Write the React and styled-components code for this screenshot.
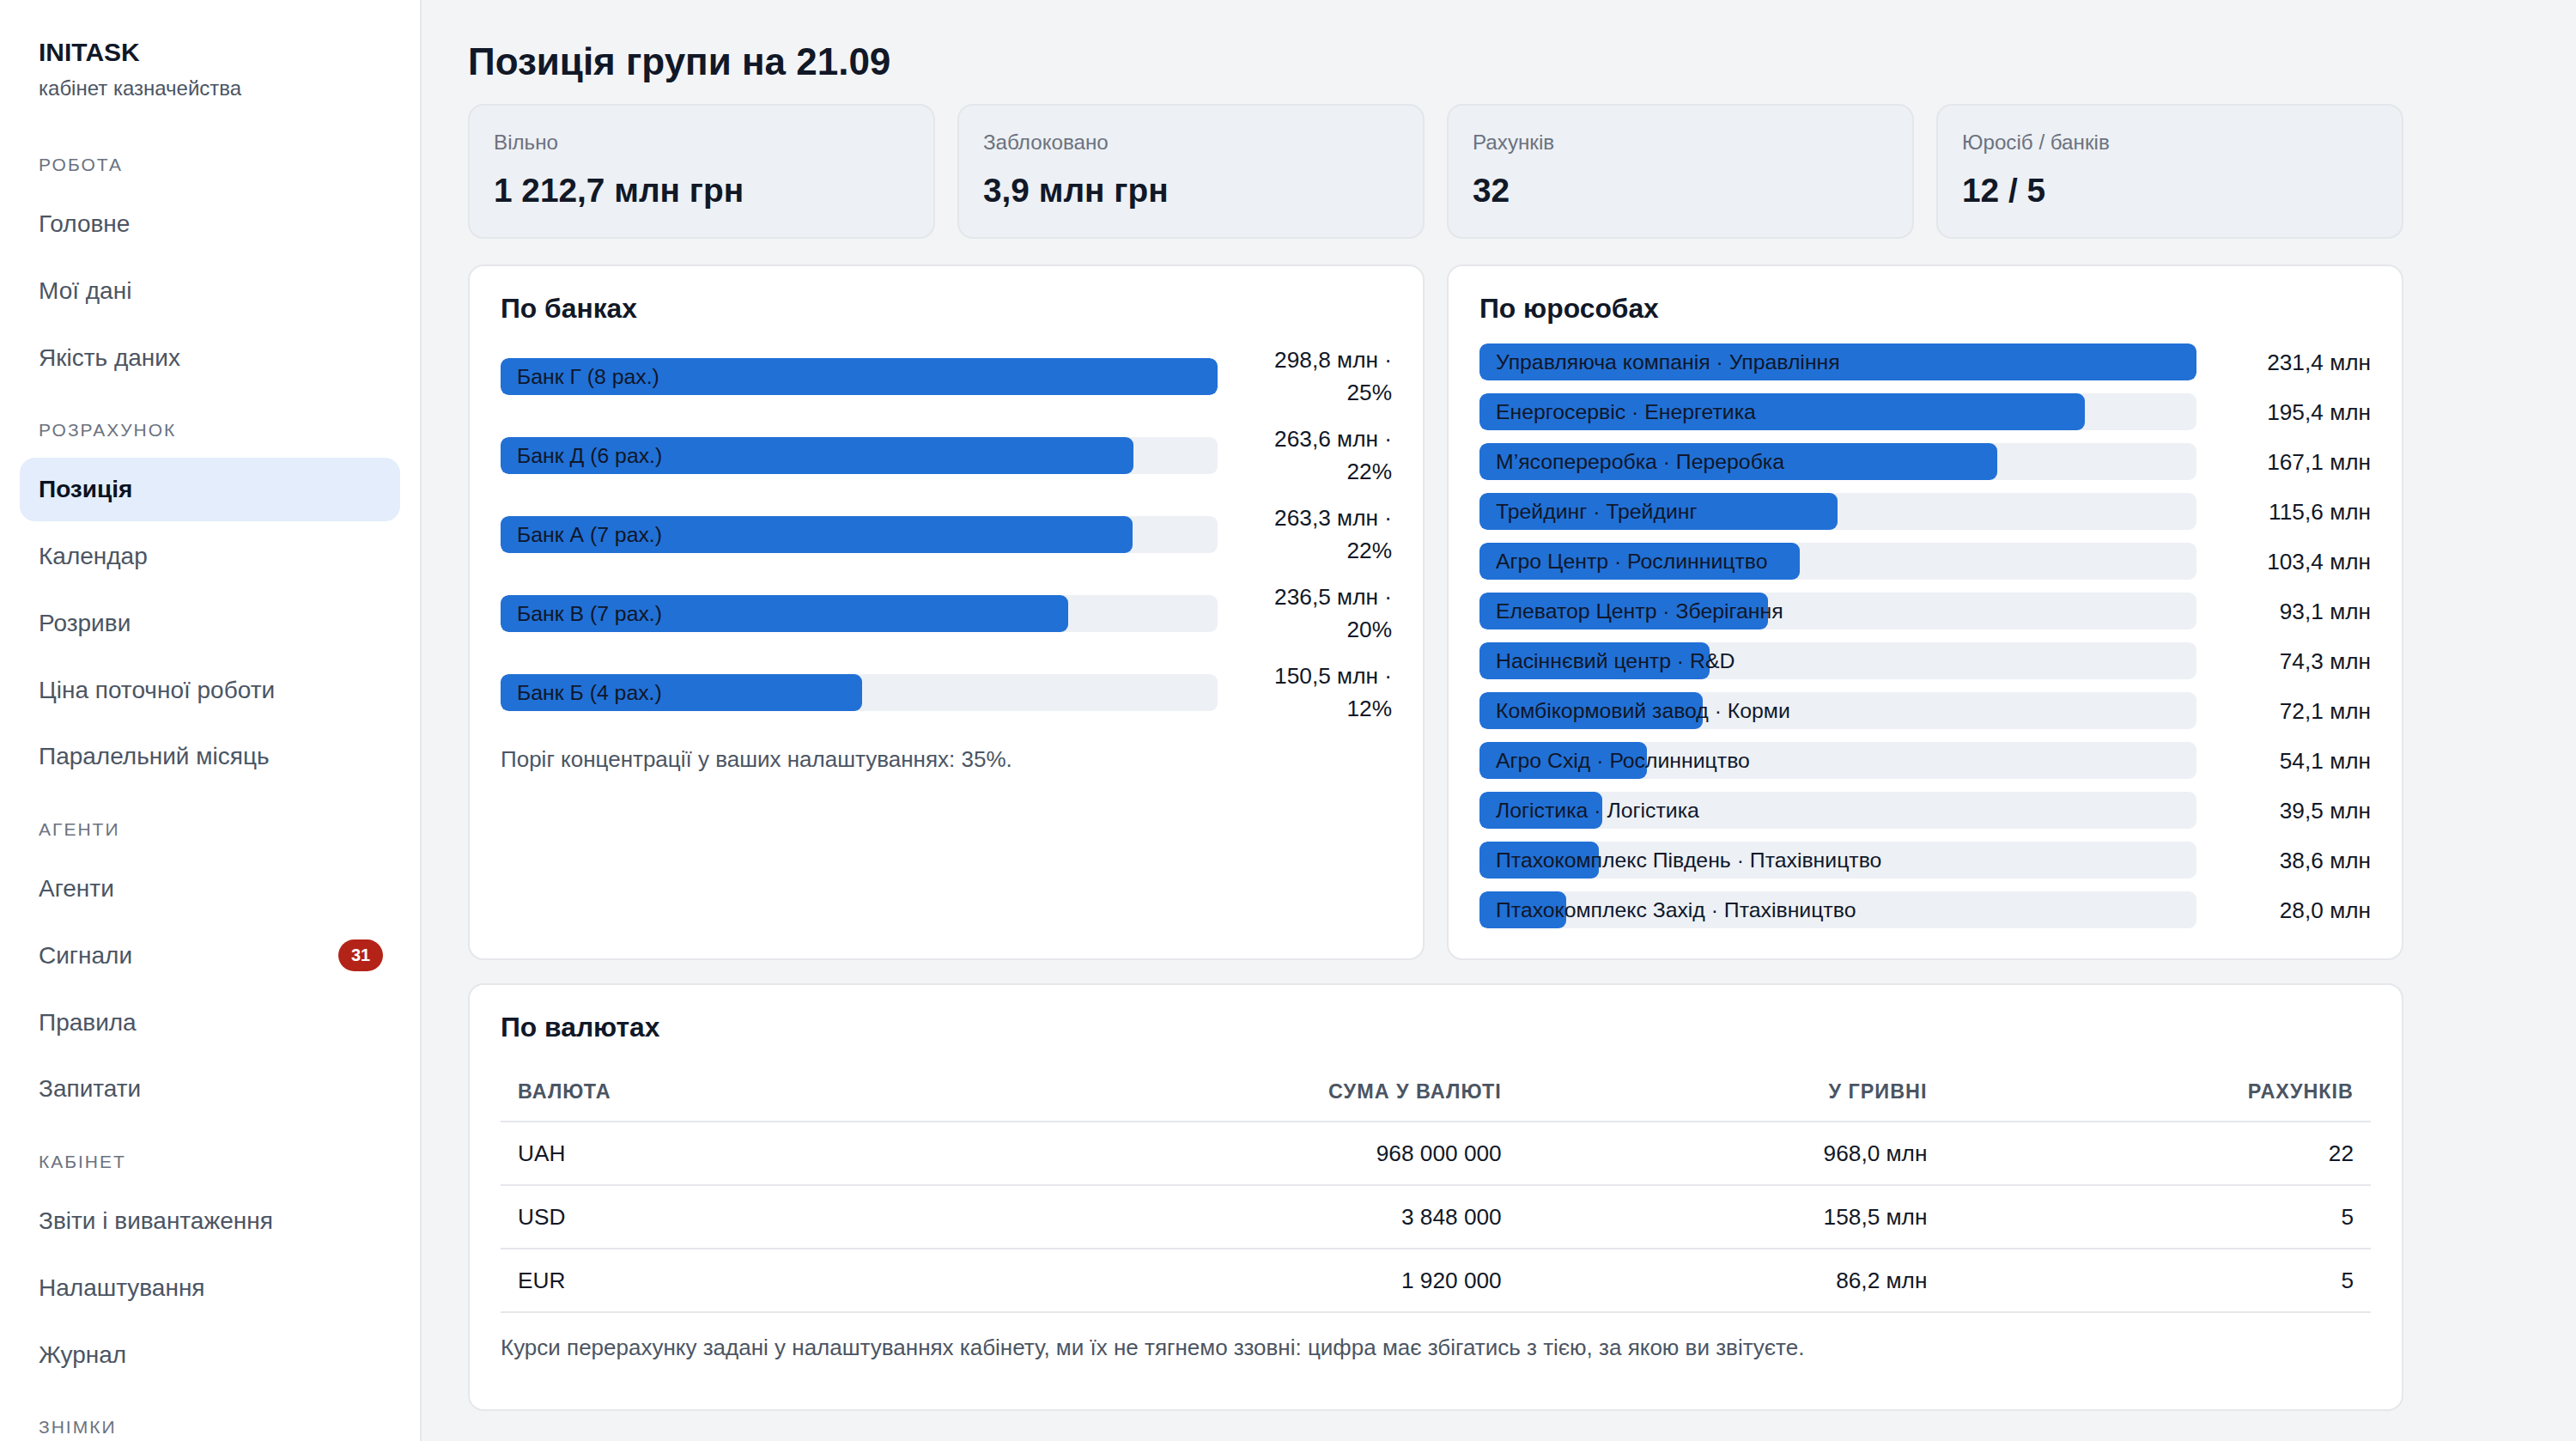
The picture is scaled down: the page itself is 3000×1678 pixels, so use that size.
import React from 'react';
import styled, { createGlobalStyle } from 'styled-components';

const GlobalStyle = createGlobalStyle`
  * { box-sizing: border-box; }
  html, body { margin: 0; padding: 0; }
  body {
    background: #f3f4f6;
    font-family: "Liberation Sans", Arial, sans-serif;
    color: #111827;
  }
`;

const Layout = styled.div`
  display: flex;
  min-height: 100vh;
`;

const Sidebar = styled.aside`
  display: flex;
  flex-direction: column;
  width: 491px;
  flex-shrink: 0;
  background: #ffffff;
  border-right: 2px solid #e5e7eb;
  padding: 43px 23px 40px;
`;

const Brand = styled.div`
  padding-left: 22px;
  margin-bottom: 30px;
`;

const BrandName = styled.div`
  font-size: 30px;
  font-weight: 700;
  line-height: 36px;
  color: #111827;
`;

const BrandSub = styled.div`
  margin-top: 8px;
  font-size: 24px;
  line-height: 31px;
  color: #4b5563;
`;

const NavSection = styled.nav`
  display: flex;
  flex-direction: column;
`;

const SectionLabel = styled.div`
  margin: 30px 0 19px;
  padding-left: 22px;
  font-size: 21px;
  line-height: 27px;
  letter-spacing: 2px;
  text-transform: uppercase;
  color: #6b7280;
`;

const NavItem = styled.div`
  display: flex;
  align-items: center;
  justify-content: space-between;
  height: 74px;
  margin-bottom: 3.75px;
  padding: 0 20px 0 22px;
  border-radius: 18px;
  font-size: 28px;
  background: ${(p) => (p.$active ? '#e3edfb' : 'transparent')};
  color: ${(p) => (p.$active ? '#0b1220' : '#4b5563')};
  font-weight: ${(p) => (p.$active ? 700 : 400)};
`;

const Badge = styled.span`
  display: inline-flex;
  align-items: center;
  justify-content: center;
  min-width: 52px;
  height: 37px;
  padding: 0 10px;
  border-radius: 999px;
  background: #b42318;
  color: #ffffff;
  font-size: 20px;
  font-weight: 700;
`;

const Main = styled.main`
  flex: 1;
  min-width: 0;
  padding: 45px 55px 37px 54px;
`;

const Content = styled.div`
  max-width: 2254px;
`;

const PageTitle = styled.h1`
  margin: 0 0 21.5px;
  font-size: 44px;
  line-height: 54px;
  font-weight: 700;
  color: #111827;
`;

const StatGrid = styled.div`
  display: grid;
  grid-template-columns: repeat(4, 1fr);
  gap: 26px;
  margin-bottom: 30.5px;
`;

const StatCard = styled.div`
  background: #edf0f4;
  border: 2px solid #e3e6ea;
  border-radius: 18px;
  padding: 29px 28px 32px;
`;

const StatLabel = styled.div`
  font-size: 24.2px;
  line-height: 28px;
  color: #6b7280;
`;

const StatValue = styled.div`
  margin-top: 19px;
  font-size: 38.8px;
  line-height: 45px;
  font-weight: 700;
  color: #111827;
`;

const PanelGrid = styled.div`
  display: grid;
  grid-template-columns: 1fr 1fr;
  gap: 26px;
  margin-bottom: 27px;
`;

const Panel = styled.section`
  background: #ffffff;
  border: 2px solid #e5e7eb;
  border-radius: 18px;
  padding: 30px 36px ${(p) => p.$padBottom || 35}px;
`;

const PanelTitle = styled.h2`
  margin: 0 0 22px;
  font-size: 31.8px;
  line-height: 38px;
  font-weight: 700;
  color: #111827;
`;

const BarList = styled.div`
  display: flex;
  flex-direction: column;
  gap: ${(p) => p.$gap}px;
`;

const BarRow = styled.div`
  display: grid;
  grid-template-columns: 1fr 170px;
  column-gap: 33px;
  align-items: center;
`;

const Track = styled.div`
  position: relative;
  height: 43px;
  background: #edf0f4;
  border-radius: 9px;
  overflow: hidden;
`;

const Fill = styled.div`
  position: absolute;
  left: 0;
  top: 0;
  bottom: 0;
  background: #2170d6;
  border-radius: 9px;
`;

const BarLabel = styled.div`
  position: relative;
  padding: 0 19px;
  line-height: 43px;
  font-size: 24.8px;
  color: #0f172a;
  white-space: nowrap;
`;

const BarValue = styled.div`
  text-align: right;
  font-size: 26.25px;
  line-height: 38px;
  color: #111827;
`;

const Note = styled.p`
  margin: 22px 0 ${(p) => p.$mb || 0}px;
  font-size: 26px;
  line-height: 36px;
  color: #4b5563;
`;

const Table = styled.table`
  width: 100%;
  border-collapse: collapse;
  table-layout: fixed;
`;

const Th = styled.th`
  padding: 18px 20px;
  font-size: 23.4px;
  line-height: 32px;
  font-weight: 700;
  letter-spacing: 1px;
  text-transform: uppercase;
  color: #4b5563;
  text-align: ${(p) => (p.$right ? 'right' : 'left')};
  border-bottom: 2px solid #e5e7eb;
  width: ${(p) => p.$w || 'auto'};
`;

const Td = styled.td`
  padding: 18px 20px;
  font-size: 26.25px;
  line-height: 36px;
  color: #111827;
  text-align: ${(p) => (p.$right ? 'right' : 'left')};
  border-bottom: 2px solid #e5e7eb;
`;

const nav = [
  { title: 'Робота', items: ['Головне', 'Мої дані', 'Якість даних'] },
  {
    title: 'Розрахунок',
    items: ['Позиція', 'Календар', 'Розриви', 'Ціна поточної роботи', 'Паралельний місяць'],
  },
  { title: 'Агенти', items: ['Агенти', 'Сигнали', 'Правила', 'Запитати'] },
  { title: 'Кабінет', items: ['Звіти і вивантаження', 'Налаштування', 'Журнал'] },
  { title: 'Знімки', items: [] },
];

const stats = [
  { label: 'Вільно', value: '1 212,7 млн грн' },
  { label: 'Заблоковано', value: '3,9 млн грн' },
  { label: 'Рахунків', value: '32' },
  { label: 'Юросіб / банків', value: '12 / 5' },
];

const banks = [
  { name: 'Банк Г (8 рах.)', v: 298.8, text: '298,8 млн · 25%' },
  { name: 'Банк Д (6 рах.)', v: 263.6, text: '263,6 млн · 22%' },
  { name: 'Банк А (7 рах.)', v: 263.3, text: '263,3 млн · 22%' },
  { name: 'Банк В (7 рах.)', v: 236.5, text: '236,5 млн · 20%' },
  { name: 'Банк Б (4 рах.)', v: 150.5, text: '150,5 млн · 12%' },
];

const entities = [
  ['Управляюча компанія · Управління', 231.4, '231,4 млн'],
  ['Енергосервіс · Енергетика', 195.4, '195,4 млн'],
  ['М’ясопереробка · Переробка', 167.1, '167,1 млн'],
  ['Трейдинг · Трейдинг', 115.6, '115,6 млн'],
  ['Агро Центр · Рослинництво', 103.4, '103,4 млн'],
  ['Елеватор Центр · Зберігання', 93.1, '93,1 млн'],
  ['Насіннєвий центр · R&D', 74.3, '74,3 млн'],
  ['Комбікормовий завод · Корми', 72.1, '72,1 млн'],
  ['Агро Схід · Рослинництво', 54.1, '54,1 млн'],
  ['Логістика · Логістика', 39.5, '39,5 млн'],
  ['Птахокомплекс Південь · Птахівництво', 38.6, '38,6 млн'],
  ['Птахокомплекс Захід · Птахівництво', 28.0, '28,0 млн'],
];

const currencies = [
  ['UAH', '968 000 000', '968,0 млн', '22'],
  ['USD', '3 848 000', '158,5 млн', '5'],
  ['EUR', '1 920 000', '86,2 млн', '5'],
];

function Bar({ label, value, max, text }) {
  return (
    <BarRow>
      <Track>
        <Fill style={{ width: `${(value / max) * 100}%` }} />
        <BarLabel>{label}</BarLabel>
      </Track>
      <BarValue>{text}</BarValue>
    </BarRow>
  );
}

export default function App() {
  const bankMax = Math.max(...banks.map((b) => b.v));
  const entMax = Math.max(...entities.map((e) => e[1]));
  return (
    <>
      <GlobalStyle />
      <Layout>
        <Sidebar>
          <Brand>
            <BrandName>INITASK</BrandName>
            <BrandSub>кабінет казначейства</BrandSub>
          </Brand>
          {nav.map((sec) => (
            <NavSection key={sec.title}>
              <SectionLabel>{sec.title}</SectionLabel>
              {sec.items.map((it) => (
                <NavItem key={it} $active={it === 'Позиція'}>
                  <span>{it}</span>
                  {it === 'Сигнали' && <Badge>31</Badge>}
                </NavItem>
              ))}
            </NavSection>
          ))}
        </Sidebar>
        <Main>
          <Content>
            <PageTitle>Позиція групи на 21.09</PageTitle>
            <StatGrid>
              {stats.map((s) => (
                <StatCard key={s.label}>
                  <StatLabel>{s.label}</StatLabel>
                  <StatValue>{s.value}</StatValue>
                </StatCard>
              ))}
            </StatGrid>
            <PanelGrid>
              <Panel>
                <PanelTitle>По банках</PanelTitle>
                <BarList $gap={16}>
                  {banks.map((b) => (
                    <Bar key={b.name} label={b.name} value={b.v} max={bankMax} text={b.text} />
                  ))}
                </BarList>
                <Note>Поріг концентрації у ваших налаштуваннях: 35%.</Note>
              </Panel>
              <Panel>
                <PanelTitle>По юрособах</PanelTitle>
                <BarList $gap={15}>
                  {entities.map((e) => (
                    <Bar key={e[0]} label={e[0]} value={e[1]} max={entMax} text={e[2]} />
                  ))}
                </BarList>
              </Panel>
            </PanelGrid>
            <Panel $padBottom={34}>
              <PanelTitle>По валютах</PanelTitle>
              <Table>
                <thead>
                  <tr>
                    <Th>Валюта</Th>
                    <Th $right $w="22.76%">Сума у валюті</Th>
                    <Th $right $w="22.76%">У гривні</Th>
                    <Th $right $w="22.8%">Рахунків</Th>
                  </tr>
                </thead>
                <tbody>
                  {currencies.map((c) => (
                    <tr key={c[0]}>
                      <Td>{c[0]}</Td>
                      <Td $right>{c[1]}</Td>
                      <Td $right>{c[2]}</Td>
                      <Td $right>{c[3]}</Td>
                    </tr>
                  ))}
                </tbody>
              </Table>
              <Note $mb={20}>
                Курси перерахунку задані у налаштуваннях кабінету, ми їх не тягнемо ззовні: цифра має
                збігатись з тією, за якою ви звітуєте.
              </Note>
            </Panel>
          </Content>
        </Main>
      </Layout>
    </>
  );
}
